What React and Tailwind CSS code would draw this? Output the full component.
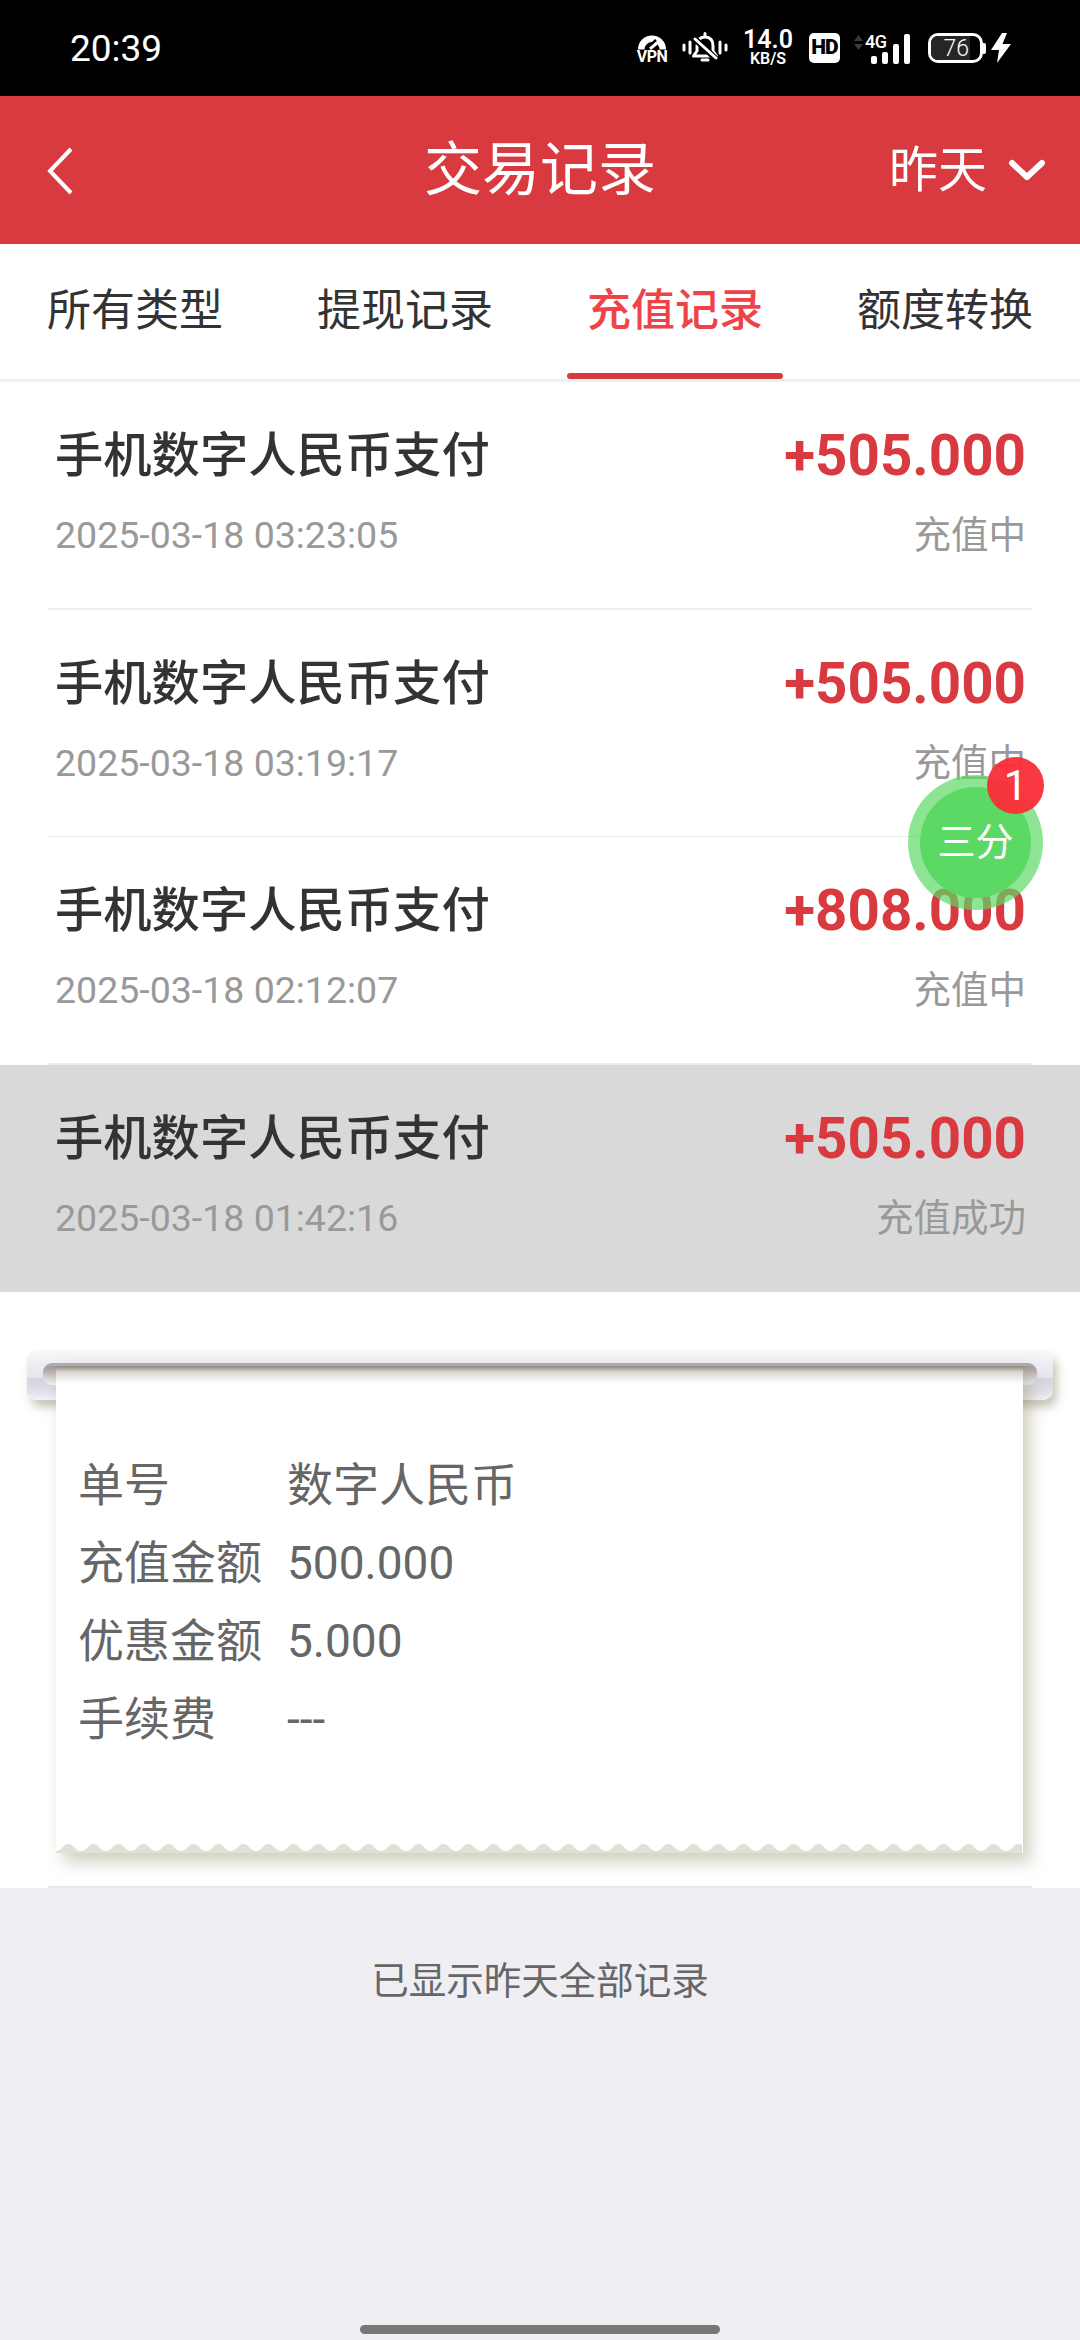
import React from "react";

const tabs = ["所有类型", "提现记录", "充值记录", "额度转换"];

const records = [
  { time: "2025-03-18 03:23:05", amount: "+505.000", status: "充值中" },
  { time: "2025-03-18 03:19:17", amount: "+505.000", status: "充值中" },
  { time: "2025-03-18 02:12:07", amount: "+808.000", status: "充值中" },
  { time: "2025-03-18 01:42:16", amount: "+505.000", status: "充值成功", active: true },
];

const details = [
  ["单号", "数字人民币"],
  ["充值金额", "500.000"],
  ["优惠金额", "5.000"],
  ["手续费", "---"],
];

function StatusIcons() {
  return (
    <div className="flex items-center text-white">
      {/* vpn */}
      <div className="flex w-[32px] flex-col items-center">
        <svg width="30" height="17" viewBox="0 0 30 17" fill="none">
          <path d="M1 16.5A14 14 0 0 1 29 16.5H22.5A7.5 7.5 0 0 0 7.5 16.5Z" fill="white" />
          <path d="M9 16L19 7" stroke="black" strokeWidth="2.4" />
          <path d="M13 16L20 10" stroke="white" strokeWidth="3" />
        </svg>
        <span className="mt-[-1px] text-[16px] font-bold leading-[15px] tracking-[-0.5px]">VPN</span>
      </div>
      {/* bell muted */}
      <svg className="ml-[14px]" width="46" height="32" viewBox="0 0 46 32" fill="none" stroke="white">
        <path d="M2 13V18M8 10V21M38 10V21M44 13V18" strokeWidth="3" strokeLinecap="round" />
        <path d="M23 5C17 5 15 9 15 14V19L11.5 24H34.5L31 19V14C31 9 29 5 23 5Z" strokeWidth="3" strokeLinejoin="round" />
        <path d="M23 1.5V4M20 28H26" strokeWidth="3" strokeLinecap="round" />
        <path d="M12 6L34 27" stroke="black" strokeWidth="6" />
        <path d="M13 7L34 26" strokeWidth="3" strokeLinecap="round" />
      </svg>
      {/* speed */}
      <div className="ml-[17px] flex w-[46px] flex-col items-center font-semibold">
        <span className="text-[25px] leading-[20px]">14.0</span>
        <span className="mt-[1px] text-[16px] leading-[15px]">KB/S</span>
      </div>
      <div className="ml-[18px] flex h-[30px] w-[31px] items-center justify-center rounded-[5px] bg-white text-[21px] font-black tracking-[-1px] text-black">
        HD
      </div>
      {/* signal */}
      <div className="relative ml-[14px] h-[32px] w-[57px]">
        <svg className="absolute left-0 top-[3px]" width="9" height="15" viewBox="0 0 9 15" fill="#3a3a3a">
          <path d="M4.5 0L9 6H0ZM0 9H9L4.5 15Z" />
        </svg>
        <span className="absolute left-[11px] top-[1px] text-[18px] font-medium leading-[17px] tracking-[-0.5px]">4G</span>
        <div className="absolute bottom-0 left-[17px] h-[8px] w-[6px] rounded-[2px] bg-white" />
        <div className="absolute bottom-0 left-[28px] h-[12px] w-[6px] rounded-[2px] bg-white" />
        <div className="absolute bottom-0 left-[39px] h-[20px] w-[6px] rounded-[2px] bg-white" />
        <div className="absolute bottom-0 left-[50px] h-[30px] w-[6px] rounded-[2px] bg-white" />
      </div>
      {/* battery */}
      <div className="ml-[17px] flex h-[30px] w-[55px] items-center overflow-hidden rounded-[10px] border-[3px] border-white">
        <div className="flex h-full w-[39px] items-center justify-end bg-[#262626] pr-[1px] text-[23px] font-light leading-none">
          76
        </div>
      </div>
      <div className="h-[11px] w-[3px] rounded-r-[2px] bg-white" />
      <svg className="ml-[5px]" width="20" height="30" viewBox="0 0 20 30" fill="white">
        <path d="M11 0L0 17H8L6 30L20 11H11.5L16 0Z" />
      </svg>
    </div>
  );
}

function Receipt() {
  return (
    <div className="relative mx-[27px] mt-[58px] pt-[16px]">
      {/* roller */}
      <div className="absolute left-0 right-0 top-0 h-[50px] rounded-[10px] bg-[linear-gradient(180deg,#f9f9fb_0%,#eeeef4_24%,#e6e6ee_54%,#d2d3de_58%,#e0e1e9_84%,#f2f2f6_100%)] shadow-[4px_7px_10px_rgba(125,120,80,0.42)]">
        <div className="absolute left-[16px] right-[16px] top-[13px] h-[22px] rounded-[9px] border-t-[3px] border-[#adadba] bg-[linear-gradient(180deg,#a0978f_0%,#f4f4f7_100%)]" />
      </div>
      {/* paper */}
      <div className="relative ml-[29px] mr-[30px] h-[487px] bg-white px-[22px] pt-[80px] text-[46px] leading-[78px] text-[#666] shadow-[7px_9px_16px_rgba(125,120,80,0.36)]">
        <div className="absolute left-0 right-0 top-0 h-[18px] bg-[linear-gradient(180deg,#90867e_0%,#dcd8d3_35%,#ffffff_100%)]" />
        {details.map(([label, value]) => (
          <div key={label} className="flex">
            <span className="w-[209px] shrink-0">{label}</span>
            <span>{value}</span>
          </div>
        ))}
        <svg className="absolute bottom-0 left-0" width="966" height="12">
          <defs>
            <pattern id="scallop" width="25" height="12" patternUnits="userSpaceOnUse">
              <path d="M0 10C6 10 7 3 12.5 3C18 3 19 10 25 10V12H0Z" fill="#e2e0d4" />
            </pattern>
          </defs>
          <rect width="966" height="12" fill="url(#scallop)" />
        </svg>
      </div>
    </div>
  );
}

export default function App() {
  return (
    <div className="relative flex h-[2340px] w-[1080px] flex-col overflow-hidden bg-[#eeeef3] font-['Roboto','Noto_Sans_CJK_SC',sans-serif]">
      {/* status bar */}
      <div className="flex h-[96px] items-center justify-between bg-black pl-[70px] pr-[69px]">
        <span className="text-[37px] leading-none text-white">20:39</span>
        <StatusIcons />
      </div>

      {/* header */}
      <div className="relative flex h-[148px] items-center justify-center bg-[#d83a40] text-white">
        <svg className="absolute left-[46px] top-[50px]" width="28" height="50" viewBox="0 0 28 50" fill="none">
          <path d="M25 3L4 25L25 47" stroke="white" strokeWidth="4" />
        </svg>
        <span className="text-[58px] leading-none">交易记录</span>
        <div className="absolute right-[34px] top-0 flex h-full items-center">
          <span className="text-[49px] leading-none">昨天</span>
          <svg className="ml-[21px]" width="38" height="24" viewBox="0 0 38 24" fill="none">
            <path d="M4 5L19 19L34 5" stroke="white" strokeWidth="6" strokeLinecap="round" strokeLinejoin="round" />
          </svg>
        </div>
      </div>

      {/* tabs */}
      <div className="grid h-[138px] grid-cols-4 border-b-[3px] border-[#eeeef3] bg-white">
        {tabs.map((tab, i) => (
          <div key={tab} className="relative flex items-center justify-center pb-[2px]">
            <span className={i === 2 ? "text-[44px] font-medium text-[#ee4449]" : "text-[44px] text-[#333]"}>{tab}</span>
            {i === 2 && <div className="absolute bottom-0 left-[27px] h-[6px] w-[216px] rounded-[3px] bg-[#d83a40]" />}
          </div>
        ))}
      </div>

      {/* records */}
      <div className="bg-white">
        {records.map((r) => (
          <div key={r.time}>
            <div className={r.active ? "flex h-[227px] justify-between bg-[#d9d9d9] pl-[55px] pr-[54px] pt-[42px]" : "flex h-[226px] justify-between pl-[55px] pr-[54px] pt-[42px]"}>
              <div>
                <div className="text-[48.3px] font-medium leading-[64px] text-[#333]">手机数字人民币支付</div>
                <div className="mt-[25px] text-[37.5px] leading-[44px] text-[#999]">{r.time}</div>
              </div>
              <div className="flex flex-col items-end">
                <div className="text-[56.5px] font-bold leading-[64px] text-[#d83a40]">{r.amount}</div>
                <div className="mt-[25px] text-[37.5px] leading-[44px] text-[#999]">{r.status}</div>
              </div>
            </div>
            {!r.active && <div className="mx-[48px] h-[1.5px] bg-[#ececec]" />}
          </div>
        ))}
      </div>

      {/* expanded detail */}
      <div className="h-[596px] bg-white">
        <Receipt />
      </div>
      <div className="mx-[48px] mt-[-2px] h-[2px] bg-[#e6e6ee]" />

      {/* footer */}
      <div className="flex flex-1 flex-col items-center pt-[65px]">
        <span className="text-[37.5px] leading-[56px] text-[#666]">已显示昨天全部记录</span>
        <div className="mb-[6px] mt-auto h-[9px] w-[360px] rounded-full bg-[#777]" />
      </div>

      {/* floating ball */}
      <div className="absolute left-[908px] top-[775px] flex h-[135px] w-[135px] items-center justify-center rounded-full bg-[rgba(92,217,101,0.7)]">
        <div className="flex h-[111px] w-[111px] items-center justify-center rounded-full bg-[#5cd965] text-[38px] text-white">
          三分
        </div>
        <div className="absolute left-[79px] top-[-18px] flex h-[57px] w-[57px] items-center justify-center rounded-full bg-[rgba(250,45,55,0.95)] text-[42px] leading-none text-white">
          1
        </div>
      </div>
    </div>
  );
}
